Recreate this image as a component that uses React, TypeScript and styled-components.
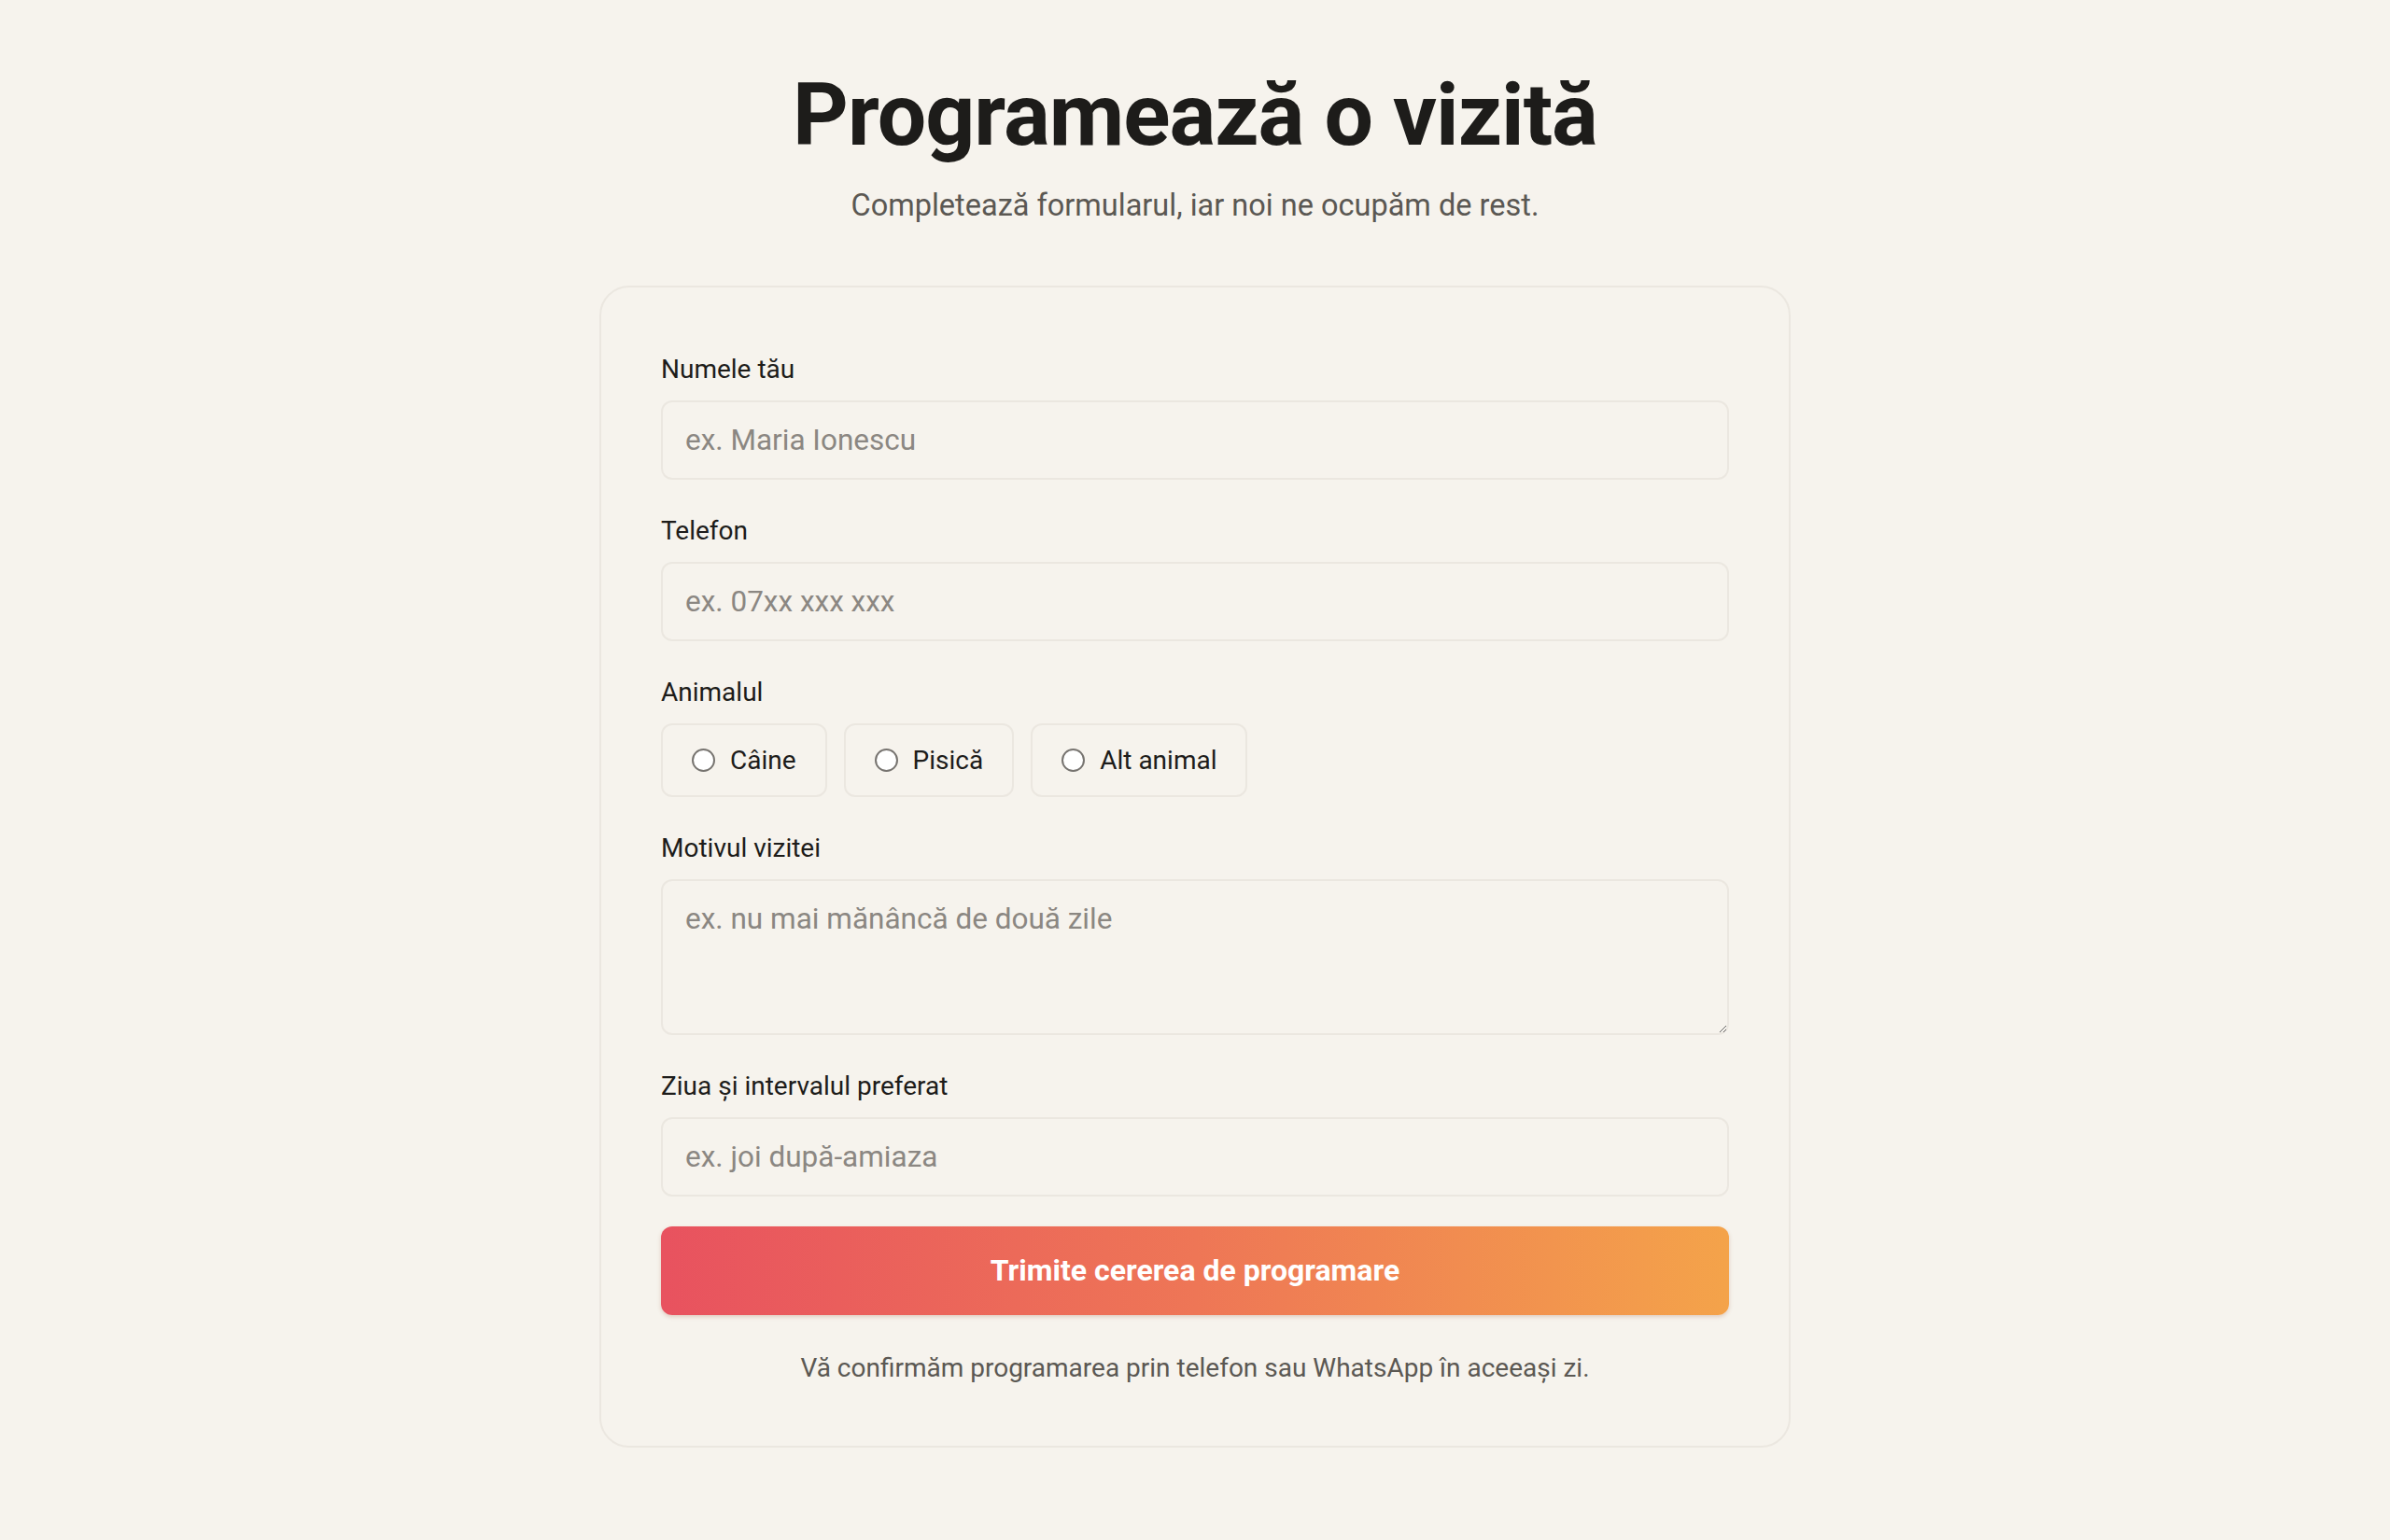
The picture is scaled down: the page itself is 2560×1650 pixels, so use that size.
import React from 'react';
import styled, {createGlobalStyle} from 'styled-components';

const GlobalStyle = createGlobalStyle`
  html, body {
    margin: 0;
    padding: 0;
    background: #f6f3ed;
  }
  body {
    font-family: Roboto, "Noto Sans", sans-serif;
    color: #1d1c1a;
  }
  * {
    box-sizing: border-box;
  }
`;

const Page = styled.main`
  min-height: 1650px;
  display: flex;
  flex-direction: column;
  align-items: center;
  padding-top: 73px;
`;

const Title = styled.h1`
  margin: 0;
  font-size: 93px;
  line-height: 1.1;
  font-weight: 700;
  letter-spacing: -1px;
  color: #1d1c1a;
`;

const Subtitle = styled.p`
  margin: 24px 0 0;
  font-size: 32.5px;
  line-height: 1.3;
  color: #5b5853;
`;

const Card = styled.form`
  width: 1276px;
  margin-top: 64px;
  padding: 71px 64px 66px;
  border: 2px solid #ebe7e0;
  border-radius: 32px;
  display: flex;
  flex-direction: column;
`;

const Field = styled.div`
  display: flex;
  flex-direction: column;
  gap: 16px;
  margin-bottom: 38px;
`;

const Label = styled.label`
  font-size: 28px;
  line-height: 34px;
  color: #1d1c1a;
`;

const TextInput = styled.input`
  height: 85px;
  padding: 0 24px;
  border: 2px solid #ebe7e0;
  border-radius: 12px;
  background: #f6f3ed;
  font-family: inherit;
  font-size: 31.5px;
  color: #1d1c1a;
  outline: none;

  &::placeholder {
    color: #8b8782;
  }
`;

const TextArea = styled.textarea`
  height: 167px;
  padding: 21px 24px;
  border: 2px solid #ebe7e0;
  border-radius: 12px;
  background: #f6f3ed;
  font-family: inherit;
  font-size: 31.5px;
  line-height: 1.3;
  color: #1d1c1a;
  outline: none;
  resize: vertical;

  &::placeholder {
    color: #8b8782;
  }
`;

const ChoiceRow = styled.div`
  display: flex;
  gap: 18px;
`;

const Choice = styled.label`
  height: 79px;
  display: flex;
  align-items: center;
  gap: 16px;
  padding: 0 31px;
  border: 2px solid #ebe7e0;
  border-radius: 12px;
  font-size: 28px;
  color: #1d1c1a;
  cursor: pointer;
`;

const Radio = styled.input`
  appearance: none;
  margin: 0;
  width: 25px;
  height: 25px;
  border-radius: 50%;
  border: 2px solid #777470;
  background: #ffffff;
`;

const SubmitButton = styled.button`
  height: 95px;
  margin-top: -6px;
  border: none;
  border-radius: 12px;
  background: linear-gradient(90deg, #e8525f 0%, #ee7656 50%, #f4a34a 100%);
  box-shadow: 0 2px 4px rgba(160, 90, 60, 0.25);
  color: #ffffff;
  font-family: inherit;
  font-size: 32px;
  font-weight: 700;
  cursor: pointer;
`;

const Note = styled.p`
  margin: 40px 0 0;
  text-align: center;
  font-size: 28px;
  line-height: 34px;
  color: #5b5853;
`;

const animals = ['Câine', 'Pisică', 'Alt animal'];

export default function App() {
  return (
    <>
      <GlobalStyle/>
      <Page>
        <Title>Programează o vizită</Title>
        <Subtitle>Completează formularul, iar noi ne ocupăm de rest.</Subtitle>
        <Card onSubmit={e => e.preventDefault()}>
          <Field>
            <Label htmlFor="name">Numele tău</Label>
            <TextInput id="name" placeholder="ex. Maria Ionescu"/>
          </Field>
          <Field>
            <Label htmlFor="phone">Telefon</Label>
            <TextInput id="phone" placeholder="ex. 07xx xxx xxx"/>
          </Field>
          <Field>
            <Label as="span">Animalul</Label>
            <ChoiceRow>
              {animals.map(animal => (
                <Choice key={animal}>
                  <Radio type="radio" name="animal" value={animal}/>
                  {animal}
                </Choice>
              ))}
            </ChoiceRow>
          </Field>
          <Field>
            <Label htmlFor="reason">Motivul vizitei</Label>
            <TextArea id="reason" placeholder="ex. nu mai mănâncă de două zile"/>
          </Field>
          <Field>
            <Label htmlFor="when">Ziua și intervalul preferat</Label>
            <TextInput id="when" placeholder="ex. joi după-amiaza"/>
          </Field>
          <SubmitButton type="submit">Trimite cererea de programare</SubmitButton>
          <Note>Vă confirmăm programarea prin telefon sau WhatsApp în aceeași zi.</Note>
        </Card>
      </Page>
    </>
  );
}
